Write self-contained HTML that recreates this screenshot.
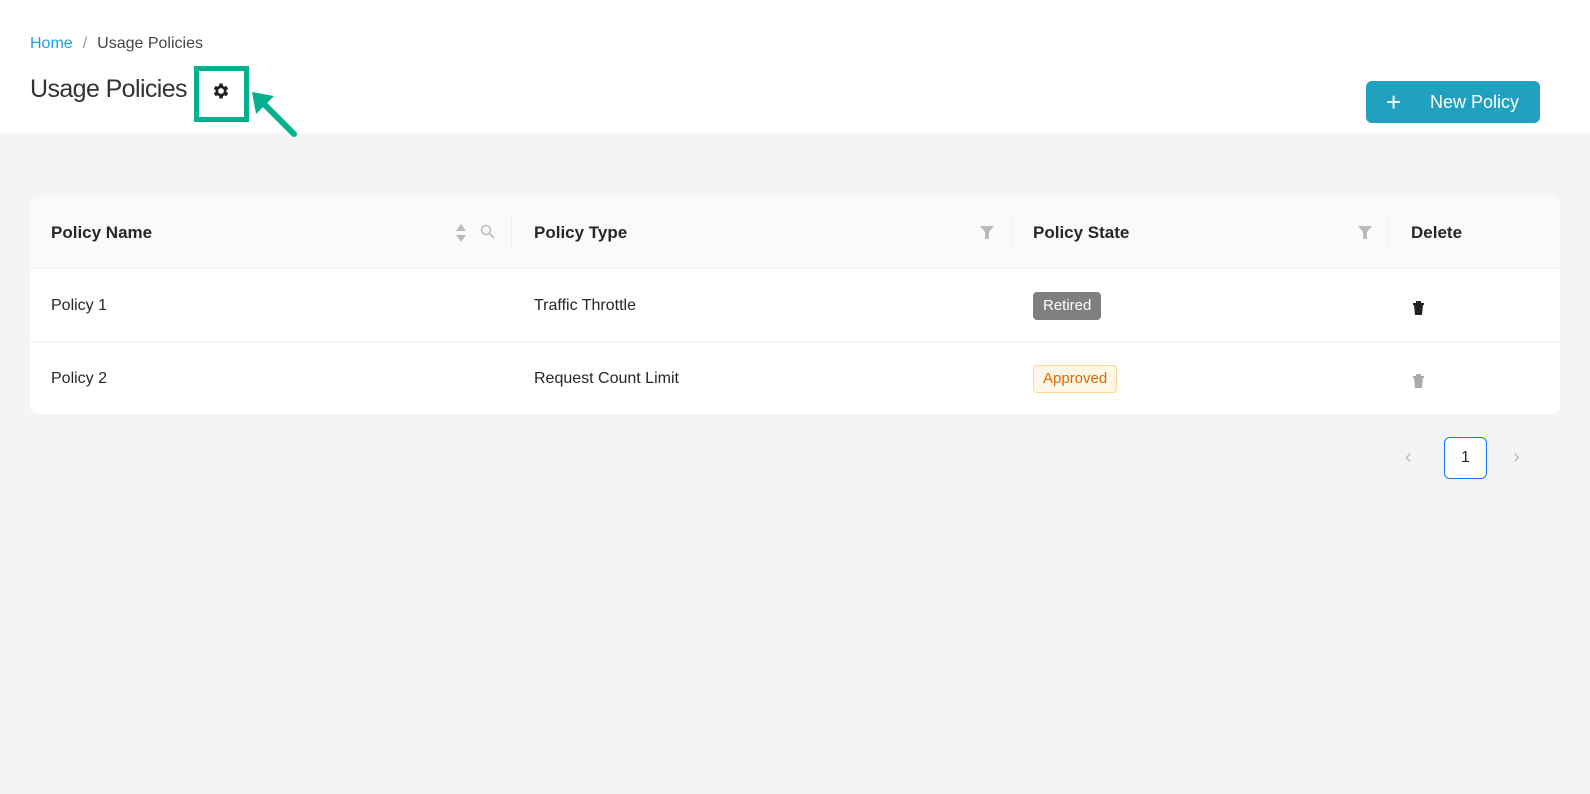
<!DOCTYPE html>
<html><head><style>
body{margin:0;width:1590px;height:794px;background:#f4f4f4;font-family:"Liberation Sans",sans-serif;color:#262626;position:relative;overflow:hidden}
.top{position:absolute;left:0;top:0;width:1590px;height:133px;background:#fff}
.a{position:absolute}
.hdr{position:absolute;left:30px;top:196px;width:1530px;height:218px;background:#fff;border-radius:8px;overflow:hidden}
.hrow{height:72px;background:#fafafa;border-bottom:1px solid #f0f0f0;position:relative}
.row{height:72px;border-bottom:1px solid #f0f0f0;position:relative}
.c{position:absolute;top:0;line-height:74px;font-size:16px}
.h{font-weight:bold;font-size:17px}
.sep{position:absolute;top:22px;width:1px;height:30px;background:#eee}
</style></head><body>
<div class="top"></div>
<div class="a" style="left:30px;top:35px;font-size:16px"><span style="color:#1ba1e2">Home</span><span style="color:#999;margin:0 10px">/</span><span style="color:#444">Usage Policies</span></div>
<div class="a" style="left:30px;top:75px;font-size:25px;color:#333;letter-spacing:-0.6px">Usage Policies</div>
<div class="a" style="left:194px;top:66px;width:45px;height:46px;border:5px solid #05b08f;background:#fff"></div>
<svg class="a" style="left:211px;top:81px" width="20" height="20" viewBox="0 0 24 24"><path fill="#222" d="M19.4 13a7.5 7.5 0 000-2l2.1-1.6-2-3.5-2.5 1a7 7 0 00-1.7-1L15 3h-4l-.4 2.9a7 7 0 00-1.7 1l-2.5-1-2 3.5L6.6 11a7.5 7.5 0 000 2l-2.1 1.6 2 3.5 2.5-1a7 7 0 001.7 1L11 21h4l.4-2.9a7 7 0 001.7-1l2.5 1 2-3.5zM13 15.5a3.5 3.5 0 110-7 3.5 3.5 0 010 7z" transform="translate(-1 0)"/></svg>
<svg class="a" style="left:248px;top:88px" width="52" height="52" viewBox="0 0 52 52"><path d="M46 46L10 10" stroke="#05b08f" stroke-width="6" stroke-linecap="round"/><path d="M4 4L26 8L8 26Z" fill="#05b08f"/></svg>
<div class="a" style="left:1366px;top:81px;width:174px;height:42px;background:#21a0c0;border-radius:6px;color:#fff;font-size:18px;line-height:42px"><span style="position:absolute;left:20px;font-size:26px">+</span><span style="position:absolute;left:64px">New Policy</span></div>
<div class="hdr">
<div class="hrow">
<div class="c h" style="left:21px">Policy Name</div>
<svg class="a" style="left:425px;top:27px" width="12" height="20"><path d="M6 1L11 8H1Z M6 19L11 12H1Z" fill="#bbb"/></svg>
<svg class="a" style="left:450px;top:28px" width="16" height="16"><circle cx="6" cy="6" r="4.5" fill="none" stroke="#bbb" stroke-width="1.5"/><path d="M9.5 9.5L14 14" stroke="#bbb" stroke-width="1.8"/></svg>
<div class="sep" style="left:481px"></div>
<div class="c h" style="left:504px">Policy Type</div>
<svg class="a" style="left:950px;top:30px" width="14" height="13"><path d="M0 0H14L9 6V13H5V6Z" fill="#bbb"/></svg>
<div class="sep" style="left:981px"></div>
<div class="c h" style="left:1003px">Policy State</div>
<svg class="a" style="left:1328px;top:30px" width="14" height="13"><path d="M0 0H14L9 6V13H5V6Z" fill="#bbb"/></svg>
<div class="sep" style="left:1358px"></div>
<div class="c h" style="left:1381px">Delete</div>
</div>
<div class="row">
<div class="c" style="left:21px">Policy 1</div>
<div class="c" style="left:504px">Traffic Throttle</div>
<div class="a" style="left:1003px;top:23px;height:28px;padding:0 10px;background:#7f7f7f;color:#fff;border-radius:4px;font-size:15px;line-height:28px">Retired</div>
<svg class="a" style="left:1382px;top:32px" width="13" height="14"><path d="M1 2H12V4H1Z M4 0H9V2H4Z M2 4H11L10 14H3Z" fill="#222"/></svg>
</div>
<div class="row" style="border:none">
<div class="c" style="left:21px">Policy 2</div>
<div class="c" style="left:504px">Request Count Limit</div>
<div class="a" style="left:1003px;top:23px;height:26px;padding:0 9px;background:#fff7e6;border:1px solid #ffd591;color:#d46b08;border-radius:4px;font-size:15px;line-height:26px">Approved</div>
<svg class="a" style="left:1382px;top:32px" width="13" height="14"><path d="M1 2H12V4H1Z M4 0H9V2H4Z M2 4H11L10 14H3Z" fill="#aaa"/></svg>
</div>
</div>
<div class="a" style="left:1405px;top:446px;color:#bbb;font-size:20px">‹</div>
<div class="a" style="left:1444px;top:437px;width:41px;height:40px;border:1px solid #1677ff;border-radius:6px;background:#fff;text-align:center;line-height:40px;font-size:16px">1</div>
<div class="a" style="left:1513px;top:446px;color:#bbb;font-size:20px">›</div>
</body></html>
